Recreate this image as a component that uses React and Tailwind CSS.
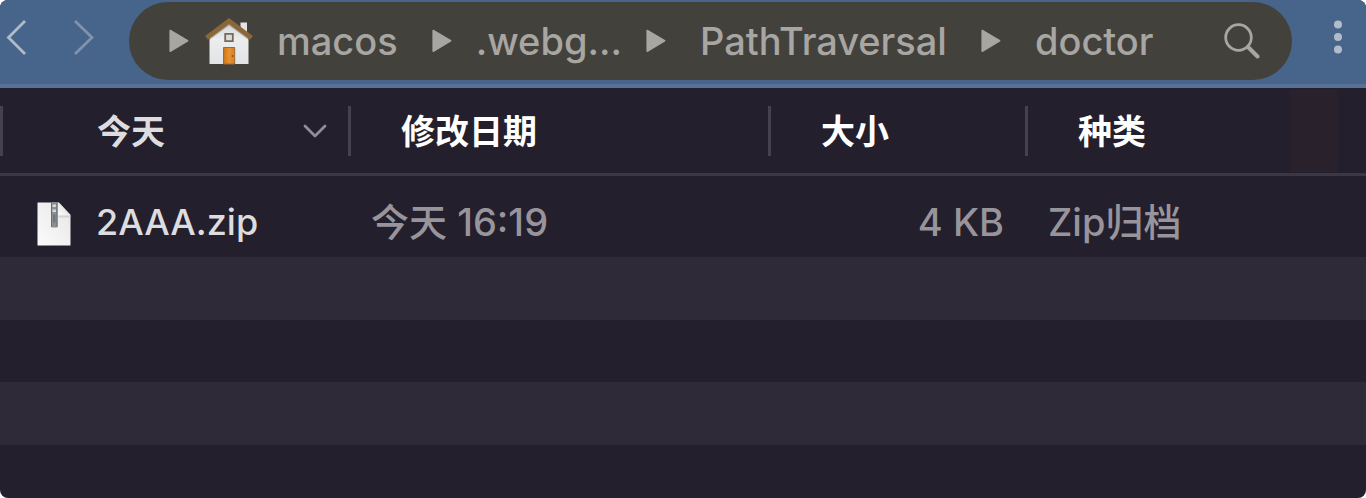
import React from 'react';

function Triangle() {
  return (
    <svg className="h-6 w-5 shrink-0" viewBox="0 0 20 24" aria-hidden="true">
      <path d="M1.2 1.5 18.6 11.8 1.2 22.2Z" fill="#a8a6a3" stroke="#a8a6a3" strokeWidth="1.6" strokeLinejoin="round" />
    </svg>
  );
}

function House() {
  return (
    <svg className="h-12 w-12 shrink-0" viewBox="0 0 48 48" aria-hidden="true">
      <defs>
        <linearGradient id="wall" x1="0" y1="0" x2="0" y2="1">
          <stop offset="0" stopColor="#d4d6d9" />
          <stop offset="0.4" stopColor="#eceded" />
          <stop offset="1" stopColor="#e2e3e5" />
        </linearGradient>
        <linearGradient id="door" x1="0" y1="0" x2="1" y2="0">
          <stop offset="0" stopColor="#c9741c" />
          <stop offset="0.5" stopColor="#eb9230" />
          <stop offset="1" stopColor="#d67f22" />
        </linearGradient>
      </defs>
      <path d="M35.500 5.500h6.500v14h-6.500z" fill="#e3e4e6" />
      <path d="M4.500 19 24 6l19.500 13v28h-39z" fill="url(#wall)" />
      <path d="M2.200 21.500 24 5.500l21.800 16" fill="none" stroke="#5f4523" strokeOpacity="0.35" strokeWidth="5" />
      <path d="M1.500 20.800 24 4l22.500 16.800" fill="none" stroke="#8a6738" strokeWidth="4.800" />
      <path d="M20.200 16.800h7.600v7.400h-7.600z" fill="#cfdfe8" stroke="#80664a" strokeWidth="1.800" />
      <path d="M18.500 30.500h11.200v16.500H18.500z" fill="url(#door)" stroke="#9b6a35" strokeWidth="1" />
      <circle cx="27.500" cy="39" r="0.900" fill="#8c4d10" />
    </svg>
  );
}

function ZipIcon() {
  return (
    <svg className="h-11 w-9 shrink-0" viewBox="0 0 36 44" aria-hidden="true">
      <defs>
        <linearGradient id="paper" x1="0" y1="1" x2="1" y2="0">
          <stop offset="0" stopColor="#fbfbfb" />
          <stop offset="1" stopColor="#e6e6e6" />
        </linearGradient>
        <linearGradient id="fold" x1="0" y1="1" x2="1" y2="0">
          <stop offset="0" stopColor="#ffffff" />
          <stop offset="1" stopColor="#cfcfcf" />
        </linearGradient>
      </defs>
      <path d="M1.500 0.500H23L34.500 13v30.500h-33z" fill="url(#paper)" />
      <path d="M22.500 13.500h12v2h-12z" fill="#c9c9c9" fillOpacity="0.7" />
      <path d="M22.500 0.500 34.500 13h-12z" fill="url(#fold)" />
      <path d="M15 0.500h6.500V24q0 1.500-1.500 1.500h-3.500Q15 25.500 15 24z" fill="#8b9092" />
      <path d="M16.500 2.500h3.500v2.500h-3.500zM16.500 7.500h3.500v2.500h-3.500z" fill="#d3dadd" />
      <path d="M17 12.500h2.500v8H17z" fill="#727779" />
      <path d="M15.500 0.500V25M21 0.500V25" stroke="#686c6e" strokeWidth="1" />
    </svg>
  );
}

function Crumb({ children }) {
  return (
    <a href="#" className="whitespace-nowrap">
      {children}
    </a>
  );
}

function Toolbar() {
  return (
    <header className="flex h-[88px] items-start border-b-4 border-[#587197] bg-[#47648a] pt-0.5">
      <button type="button" aria-label="后退" className="mt-4 ml-1.5 h-10 w-6 shrink-0">
        <svg className="h-10 w-6" viewBox="0 0 24 40" fill="none" stroke="#b1bccb" strokeWidth="2.800">
          <path d="M19 3 2.500 19.500 19 36" />
        </svg>
      </button>
      <button type="button" aria-label="前进" className="mt-4 ml-10 h-10 w-6 shrink-0">
        <svg className="h-10 w-6" viewBox="0 0 24 40" fill="none" stroke="#8092ad" strokeWidth="2.800">
          <path d="M5 3 22 19.500 5 36" />
        </svg>
      </button>
      <div className="ml-[35px] flex h-[78px] min-w-0 flex-1 items-center justify-between rounded-full bg-[#43413c] pr-8 pl-10 text-[#a8a6a3]">
        <nav aria-label="路径" className="flex items-center gap-[34px] text-[38px] leading-10 font-medium">
          <div className="flex items-center gap-4">
            <Triangle />
            <House />
            <span className="ml-2"><Crumb>macos</Crumb></span>
          </div>
          <div className="flex items-center gap-6">
            <Triangle />
            <Crumb>.webg...</Crumb>
            <Triangle />
          </div>
          <Crumb>PathTraversal</Crumb>
          <Triangle />
          <Crumb>doctor</Crumb>
        </nav>
        <button type="button" aria-label="搜索" className="h-9 w-9 shrink-0">
          <svg className="h-9 w-9" viewBox="0 0 36 36" fill="none" stroke="#a8a6a3">
            <circle cx="14.500" cy="14.500" r="12.800" strokeWidth="2.800" />
            <path d="m24 24 9.500 9.500" strokeWidth="4" strokeLinecap="round" />
          </svg>
        </button>
      </div>
      <button type="button" aria-label="更多" className="mt-4 mr-[22px] ml-10 h-10 w-3 shrink-0">
        <svg className="h-10 w-3" viewBox="0 0 12 40" fill="#b1bccb">
          <circle cx="6" cy="6.500" r="4" />
          <circle cx="6" cy="19" r="4" />
          <circle cx="6" cy="31.500" r="4" />
        </svg>
      </button>
    </header>
  );
}

function HeadCell({ children, className }) {
  return (
    <div className={'flex h-[50px] items-center border-[#46414f] ' + className}>
      {children}
    </div>
  );
}

function FileTable() {
  return (
    <table className="w-full table-fixed border-collapse text-left">
      <colgroup>
        <col className="w-[351px]" />
        <col className="w-[420px]" />
        <col className="w-[257px]" />
        <col />
      </colgroup>
      <thead className="text-[34px] leading-10 text-white">
        <tr className="h-[86px] border-b-3 border-[#3c3744]">
          <th className="p-0 pt-0.5 font-bold text-[#dddcdf]">
            <HeadCell className="justify-between border-r-3 border-l-3 pr-5 pl-[94px]">
              <span className="pt-0.5">今天</span>
              <svg className="h-7 w-7" viewBox="0 0 28 28" fill="none" stroke="#918d98" strokeWidth="2.800" strokeLinecap="round" strokeLinejoin="round" aria-hidden="true">
                <path d="m5 9 10 10L25 9" />
              </svg>
            </HeadCell>
          </th>
          <th className="p-0 pt-0.5 font-bold">
            <HeadCell className="border-r-3 pl-[50px]"><span className="pt-0.5">修改日期</span></HeadCell>
          </th>
          <th className="p-0 pt-0.5 font-bold">
            <HeadCell className="border-r-3 pl-[50px]"><span className="pt-0.5">大小</span></HeadCell>
          </th>
          <th className="p-0 font-bold">
            <div className="flex h-[83px] items-center justify-between pt-1 pr-7 pl-[50px]">
              <span>种类</span>
              <span className="w-12 -mt-1 self-stretch bg-[#29212b]" />
            </div>
          </th>
        </tr>
      </thead>
      <tbody className="text-[38px] leading-10 font-medium text-[#98949c]">
        <tr className="h-[83px]">
          <td className="p-0 pt-4 text-[36px] text-[#dddcdf]">
            <div className="flex items-start gap-6 pl-9">
              <ZipIcon />
              <span>2AAA.zip</span>
            </div>
          </td>
          <td className="p-0 pt-3 pl-5">今天 16:19</td>
          <td className="p-0 pt-3 pr-6 text-right">4 KB</td>
          <td className="p-0 pt-3 pl-5">Zip归档</td>
        </tr>
      </tbody>
    </table>
  );
}

export default function App() {
  return (
    <div className="bg-white">
      <main className="flex min-h-screen flex-col overflow-hidden rounded-lg bg-[#241f2c] font-['Inter','Noto_Sans_CJK_SC',sans-serif]">
        <Toolbar />
        <FileTable />
        <div className="h-[63px] bg-[#2f2a37]" />
        <div className="h-[62px]" />
        <div className="h-[63px] bg-[#2f2a37]" />
      </main>
    </div>
  );
}
